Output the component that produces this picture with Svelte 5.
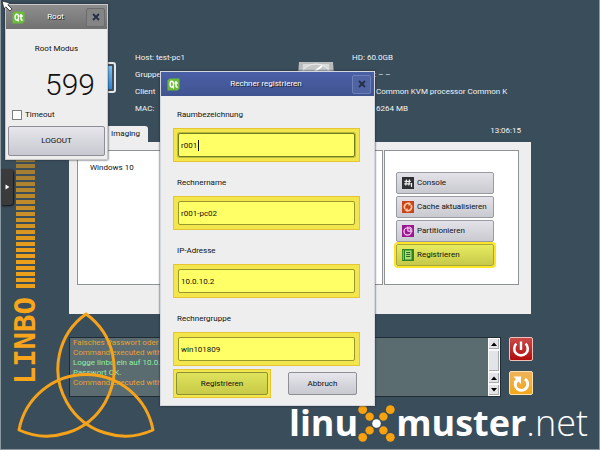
<script>
  let timeout = $state(false);
  let fields = $state([
    { id: 'room', label: 'Raumbezeichnung', value: 'r001' },
    { id: 'host', label: 'Rechnername', value: 'r001-pc02' },
    { id: 'ip', label: 'IP-Adresse', value: '10.0.10.2' },
    { id: 'group', label: 'Rechnergruppe', value: 'win101809' }
  ]);
  const log = [
    { text: 'Falsches Passwort oder ungültig.', ok: false },
    { text: 'Command executed with exit 1', ok: false },
    { text: 'Logge linbo ein auf 10.0.0.1', ok: true },
    { text: 'Passwort OK.', ok: true },
    { text: 'Command executed with exit 0', ok: false }
  ];
</script>

{#snippet qt()}
  <svg class="qt" width="13" height="13" viewBox="0 0 13 13" aria-hidden="true">
    <path d="M2.5 0.5H12.5V10.5L10.5 12.5H0.5V2.5Z" fill="#6cbb3c" />
    <ellipse cx="4.8" cy="6.2" rx="1.7" ry="2.9" fill="none" stroke="#fff" stroke-width="1.4" />
    <path d="M5.2 8.4L6.8 10.4M9 3V8Q9 9.4 10.8 9M7.4 5H10.8" fill="none" stroke="#fff" stroke-width="1.4" />
  </svg>
{/snippet}

{#snippet closeIcon()}
  <svg width="8" height="8" viewBox="0 0 8 8" aria-hidden="true">
    <path d="M1 1L7 7M7 1L1 7" stroke="#262e45" stroke-width="1.8" />
  </svg>
{/snippet}

<div class="desktop">
  <aside class="brand">
    <div class="bars"></div>
    <div class="linbo">LINBO</div>
  </aside>

  <main>
    <header class="info">
      <svg class="monitor" width="44" height="32" viewBox="0 0 44 32" aria-hidden="true">
        <defs>
          <linearGradient id="scr" x1="0" y1="0" x2="0" y2="1">
            <stop offset="0" stop-color="#7cc4f6" /><stop offset="1" stop-color="#2d86d8" />
          </linearGradient>
        </defs>
        <rect x="1" y="1" width="42" height="29" rx="2" fill="#43505a" stroke="#e4e8ea" stroke-width="2" />
        <rect x="4" y="4" width="36" height="23" fill="url(#scr)" />
      </svg>
      <div class="facts left">
        <p>Host: test-pc1</p>
        <p>Gruppe</p>
        <p>Client</p>
        <p>MAC:</p>
      </div>
      <svg class="disk" width="38" height="30" viewBox="0 0 38 30" aria-hidden="true">
        <path d="M2 0H36L38 28H0Z" fill="#b9bcbd" />
        <path d="M6 2H32L33 20H5Z" fill="#d9dbdb" />
        <ellipse cx="19" cy="11" rx="13" ry="9" fill="#c5c8c9" stroke="#eee" />
        <path d="M17 10L25 4" stroke="#fff" stroke-width="2" />
      </svg>
      <div class="facts">
        <p>HD: 60.0GB</p>
        <p><span>Cache:</span> –&thinsp;–</p>
        <p><span>CPU:</span>Common KVM processor Common K</p>
        <p><span>RAM:</span>6264 MB</p>
      </div>
    </header>

    <div class="tabbar">
      <button class="tab">Imaging</button>
      <time>13:06:15</time>
    </div>

    <section class="panel">
      <div class="list">Windows 10</div>
      <div class="actions">
        <button class="act">
          <svg width="12" height="12" viewBox="0 0 12 12" aria-hidden="true">
            <rect width="12" height="12" fill="#2f3033" />
            <path d="M4.5 2.5L3.8 8.5M7.5 2.5L6.8 8.5M2.5 4.3H8.8M2.2 6.8H8.5M9.5 6V10" stroke="#eee" stroke-width="1.2" fill="none" />
          </svg>Console</button>
        <button class="act">
          <svg width="12" height="12" viewBox="0 0 12 12" aria-hidden="true">
            <rect width="12" height="12" fill="#c9441c" />
            <path d="M3 8A3.6 3.6 0 0 1 7.5 2.7M9 4A3.6 3.6 0 0 1 4.5 9.3" stroke="#ffc9a0" stroke-width="1.6" fill="none" />
            <path d="M6.5 1L9.5 3L6.6 5ZM5.5 7L2.5 9L5.5 11Z" fill="#ffc9a0" />
          </svg>Cache aktualisieren</button>
        <button class="act">
          <svg width="12" height="12" viewBox="0 0 12 12" aria-hidden="true">
            <rect width="12" height="12" fill="#9c178f" />
            <circle cx="5.6" cy="6.4" r="3.6" fill="none" stroke="#f3c6ef" stroke-width="1.3" />
            <path d="M5.8 6.2V1.5M5.8 6.2H10.5" stroke="#f3c6ef" stroke-width="1.2" />
            <path d="M7.2 1.8A3.6 3.6 0 0 1 10 4.8" fill="none" stroke="#f3c6ef" />
          </svg>Partitionieren</button>
        <button class="act marked">
          <svg width="12" height="12" viewBox="0 0 12 12" aria-hidden="true">
            <rect width="12" height="12" fill="#2e8422" />
            <rect x="3" y="1.5" width="6.5" height="9" fill="#a9dc7a" />
            <path d="M4.2 3.5H8.3M4.2 5.5H8.3M4.2 7.5H8.3" stroke="#2e6420" />
            <path d="M1.3 1V11" stroke="#8ed060" />
          </svg>Registrieren</button>
      </div>
    </section>

    <div class="status">
      <div class="log">
        <div class="lines">
          {#each log as line}
            <p class:ok={line.ok}>{line.text}</p>
          {/each}
        </div>
        <div class="scroll" aria-hidden="true">
          <i><svg width="6" height="4" viewBox="0 0 6 4"><path d="M0 4L3 0.5L6 4Z" /></svg></i>
          <b></b>
          <i><svg width="6" height="4" viewBox="0 0 6 4"><path d="M0 4L3 0.5L6 4Z" /></svg></i>
          <i><svg width="6" height="4" viewBox="0 0 6 4"><path d="M0 0L3 3.5L6 0Z" /></svg></i>
        </div>
      </div>
      <div class="power">
        <button class="off" aria-label="Ausschalten">
          <svg width="22" height="22" viewBox="0 0 22 22" aria-hidden="true">
            <path d="M6.4 5.6A6.8 6.8 0 1 0 15.6 5.6" fill="none" stroke="#fff" stroke-width="2.6" />
            <path d="M11 3.5V12" stroke="#fff" stroke-width="2.4" />
          </svg>
        </button>
        <button class="reboot" aria-label="Neustart">
          <svg width="22" height="22" viewBox="0 0 22 22" aria-hidden="true">
            <path d="M5.5 10.5A6.2 6.2 0 1 0 15 7" fill="none" stroke="#fff" stroke-width="3" />
            <path d="M3.5 4.5H11V12L8.5 9.6L6 12L3.5 10L6 7Z" fill="#fff" />
          </svg>
        </button>
      </div>
    </div>
  </main>

  <footer>
    <span class="bold">linu</span>
    <svg width="37" height="37" viewBox="0 0 37 37" aria-hidden="true">
      <g fill="#f7a20e">
        <circle cx="4.7" cy="4.7" r="4.4" /><circle cx="11.6" cy="11.6" r="4.2" />
        <circle cx="32.3" cy="4.7" r="4.4" /><circle cx="25.4" cy="11.6" r="4.2" />
        <circle cx="4.7" cy="32.3" r="4.4" /><circle cx="11.6" cy="25.4" r="4.2" />
        <circle cx="32.3" cy="32.3" r="4.4" /><circle cx="25.4" cy="25.4" r="4.2" />
      </g>
      <circle cx="18.5" cy="18.5" r="4.3" fill="#fff" />
    </svg>
    <span class="bold">muster</span><span class="thin">.net</span>
  </footer>

  <svg class="knot" width="140" height="130" viewBox="16 312 140 130" aria-hidden="true">
    <path d="M86 314A67.3 67.3 0 0 0 153 430A68.2 68.2 0 0 0 19 430A67.3 67.3 0 0 0 86 314Z" fill="none" stroke="#f5a31a" stroke-width="3" stroke-linejoin="round" />
  </svg>

  <button class="handle" aria-label="Ausklappen">
    <svg width="5" height="6" viewBox="0 0 5 6" aria-hidden="true"><path d="M0.5 0.5L4.5 3L0.5 5.5Z" fill="#fff" /></svg>
  </button>

  <section class="window root">
    <div class="title">{@render qt()}<h2>Root</h2><button class="close" aria-label="Schließen">{@render closeIcon()}</button></div>
    <p class="mode">Root Modus</p>
    <output class="lcd">599</output>
    <label class="check"><input type="checkbox" bind:checked={timeout} />Timeout</label>
    <button class="push logout">LOGOUT</button>
  </section>

  <section class="window dialog">
    <div class="title">{@render qt()}<h2>Rechner registrieren</h2><button class="close" aria-label="Schließen">{@render closeIcon()}</button></div>
    <form onsubmit={(e) => e.preventDefault()}>
      {#each fields as field, i}
        <label for={field.id}>{field.label}</label>
        <div class="frame">
          <input id={field.id} type="text" bind:value={field.value} />
          {#if i === 0}<span class="caret"></span>{/if}
        </div>
      {/each}
      <div class="row">
        <div class="frame submit"><button class="push yellow" type="submit">Registrieren</button></div>
        <button class="push cancel" type="button">Abbruch</button>
      </div>
    </form>
  </section>

  <svg class="cursor" width="12" height="12" viewBox="0 0 12 12" aria-hidden="true">
    <path d="M1 1L9 3L6.8 4.8L11 9L9 11L4.8 6.8L3 9Z" fill="#fff" stroke="#222" stroke-width="0.8" />
  </svg>
</div>

<style>
  :global(body) { margin: 0; background: #3a4d5a; }
  .desktop, .desktop button, .desktop input {
    font-family: Roboto, "Liberation Sans", Arial, sans-serif;
    font-size: 8px;
    line-height: 10px;
    color: #111;
  }
  .desktop {
    position: relative;
    box-sizing: border-box;
    min-height: 100vh;
    display: grid;
    grid-template-columns: 68px 1fr;
    grid-template-rows: auto 1fr;
    background: #3a4d5a;
    border: solid #8b989f;
    border-width: 0 1px 1px;
    overflow: hidden;
  }
  .desktop p, .desktop h2 { margin: 0; font: inherit; }
  button { box-sizing: border-box; margin: 0; padding: 0; }
  svg { display: block; flex: none; }

  .brand { padding: 112px 0 0 15px; }
  .bars {
    width: 19px;
    height: 176px;
    background:
      linear-gradient(to bottom, #3a4d5a 0, rgba(58, 77, 90, 0.45) 50px, rgba(58, 77, 90, 0) 140px),
      repeating-linear-gradient(to top, #ec9f1a 0 4px, #3a4d5a 4px 6px);
  }
  .linbo {
    margin-top: 9px;
    width: 19px;
    writing-mode: vertical-rl;
    rotate: 180deg;
    font: bold 29px/19px "DejaVu Sans Mono", monospace;
    color: #f9a51b;
  }

  main { padding-right: 68px; }
  .info {
    display: flex;
    align-items: flex-start;
    height: 126px;
    box-sizing: border-box;
    padding-top: 49px;
    color: #f2f4f5;
  }
  .monitor { margin: 13px 19px 0 3px; }
  .disk { margin: 13px 17px 0 0; }
  .facts { white-space: nowrap; }
  .facts.left { width: 162px; }
  .desktop .facts p { line-height: 17px; }
  .facts span { display: inline-block; min-width: 24px; }

  .tabbar { display: flex; justify-content: space-between; height: 16px; }
  .tab {
    width: 79px;
    padding: 0 8px 0 0;
    text-align: right;
    border: 0;
    border-radius: 0 3px 0 0;
    background: #eee;
  }
  time { color: #f2f4f5; padding: 0 10px 0 0; }
  .panel {
    display: flex;
    gap: 1px;
    padding: 8px 12px 29px 8px;
    background: #eee;
  }
  .list, .actions { background: #fff; border: 1px solid #8f9396; box-sizing: border-box; height: 135px; }
  .list { flex: 1; padding: 12px; }
  .actions { width: 135px; padding: 21px 11px 0; display: flex; flex-direction: column; gap: 2px; }
  .act {
    flex: none;
    display: flex;
    align-items: center;
    gap: 3px;
    height: 22px;
    width: 98px;
    padding-left: 5px;
    border: 1px solid #9a9aa2;
    border-radius: 2px;
    background: linear-gradient(#e2e2e8, #c9c9d0);
  }
  .marked { background: linear-gradient(#e8ec60, #c6c94a); border-color: #a8a83a; box-shadow: 0 0 0 2px #fde428; }

  .status { display: flex; gap: 8px; margin: 23px -2px 0 0; }
  .log {
    flex: 1;
    display: flex;
    height: 60px;
    box-sizing: border-box;
    border: 1px solid #1f2c36;
    background: #5a6c70;
    overflow: hidden;
  }
  .lines { flex: 1; padding-left: 3px; color: #e8a036; }
  .lines p.ok { color: #8ef0a4; }
  .scroll { width: 12px; display: flex; flex-direction: column; background: #cfcfd6; }
  .scroll i, .scroll b { box-sizing: border-box; border: 1px solid #fafafa; background: #e3e3ea; box-shadow: inset -1px -1px #aaa; }
  .scroll i { height: 12px; display: grid; place-items: center; }
  .scroll b { flex: 1; }
  .power { display: flex; flex-direction: column; gap: 10px; }
  .power button { width: 24px; height: 24px; border: 1px solid #f0c0b8; border-radius: 2px; }
  .off { background: linear-gradient(#c94a48, #b30c0c); }
  .power .reboot { border-color: #f8e0b0; background: linear-gradient(#f0b25a, #f0a818); }

  footer {
    grid-column: 1 / -1;
    display: flex;
    justify-content: flex-end;
    align-items: center;
    padding: 0 11px 0 0;
    height: 52px;
    color: #fff;
    font: 36px/40px "Open Sans", "Noto Sans", sans-serif;
  }
  footer svg { margin: 0 1px 0 0; }
  .bold { font-weight: 700; }
  .thin { font-weight: 300; }

  .knot { position: absolute; left: 15px; top: 312px; }
  .handle {
    position: absolute; left: 0; top: 169px;
    width: 12px; height: 36px;
    display: grid; place-items: center;
    border: 0; border-radius: 0 3px 3px 0;
    background: #3b3b3b; box-shadow: 1px 1px 2px #111;
  }
  .cursor { position: absolute; left: 0; top: 0; }

  .window { position: absolute; box-sizing: border-box; background: #eee; box-shadow: 0 0 2px #1c2730; }
  .title { display: flex; align-items: center; color: #fff; text-shadow: 1px 1px #222; }
  .title h2 { flex: 1; text-align: center; }
  .close { display: grid; place-items: center; width: 19px; height: 19px; border-radius: 2px; }

  .root { left: 4px; top: 4px; width: 103px; padding-bottom: 3px; border: 1px solid #c8c8c8; }
  .root .title { height: 24px; padding: 0 2px 0 6px; background: linear-gradient(#8e8e8e, #717171); }
  .root .close { background: #858585; border: 1px solid #6c6c6c; }
  .desktop .mode { margin-top: 15px; text-align: center; }
  .lcd {
    display: block;
    margin: 13px 12px 0 0;
    text-align: right;
    font: 300 30px/36px Roboto, "Liberation Sans", sans-serif;
  }
  .check { display: flex; align-items: center; gap: 3px; margin: 7px 0 6px 6px; height: 10px; }
  .check input { appearance: none; box-sizing: border-box; margin: 0; width: 10px; height: 10px; border: 1px solid #808080; background: #fff; }

  .push { border: 1px solid #8e8e96; border-radius: 2px; background: linear-gradient(#e6e6ec, #c8c8d0); }
  .logout { display: block; width: calc(100% - 4px); height: 30px; margin: 0 2px; }

  .dialog { left: 159px; top: 71px; width: 215px; border: 1px solid #d4d7de; }
  .dialog .title { height: 24px; padding: 0 3px 0 6px; background: linear-gradient(#4a60a6, #415491); }
  .dialog .close { background: #5064a4; border: 1px solid #6e80b8; }
  form { display: flex; flex-direction: column; padding: 0 14px 7px 12px; }
  form label { margin: 14px 0 6px 4px; line-height: 14px; }
  form label:first-child { margin-top: 12px; }
  .frame { position: relative; box-sizing: border-box; padding: 4px; border: 1px solid #e6c532; background: #f2e64c; }
  .frame input {
    display: block; box-sizing: border-box; width: 100%; height: 24px;
    padding: 0 2px; border: 1px solid #98982c; border-radius: 2px;
    background: #ffff66; outline: 0;
  }
  .frame:nth-of-type(1) input { border-color: #6f7d20; box-shadow: 0 0 0 1px #b8bb3c; }
  .caret { position: absolute; left: 24px; top: 11px; width: 1px; height: 11px; background: #111; }
  .row { display: flex; align-items: center; justify-content: space-between; margin-top: 3px; padding-right: 3px; }
  .submit { width: 98px; padding: 2px; }
  .push.yellow { display: block; width: 100%; height: 23px; border-color: #8f8f38; background: linear-gradient(#dfe35a, #c8ca48); }
  .cancel { width: 69px; height: 23px; }
</style>
